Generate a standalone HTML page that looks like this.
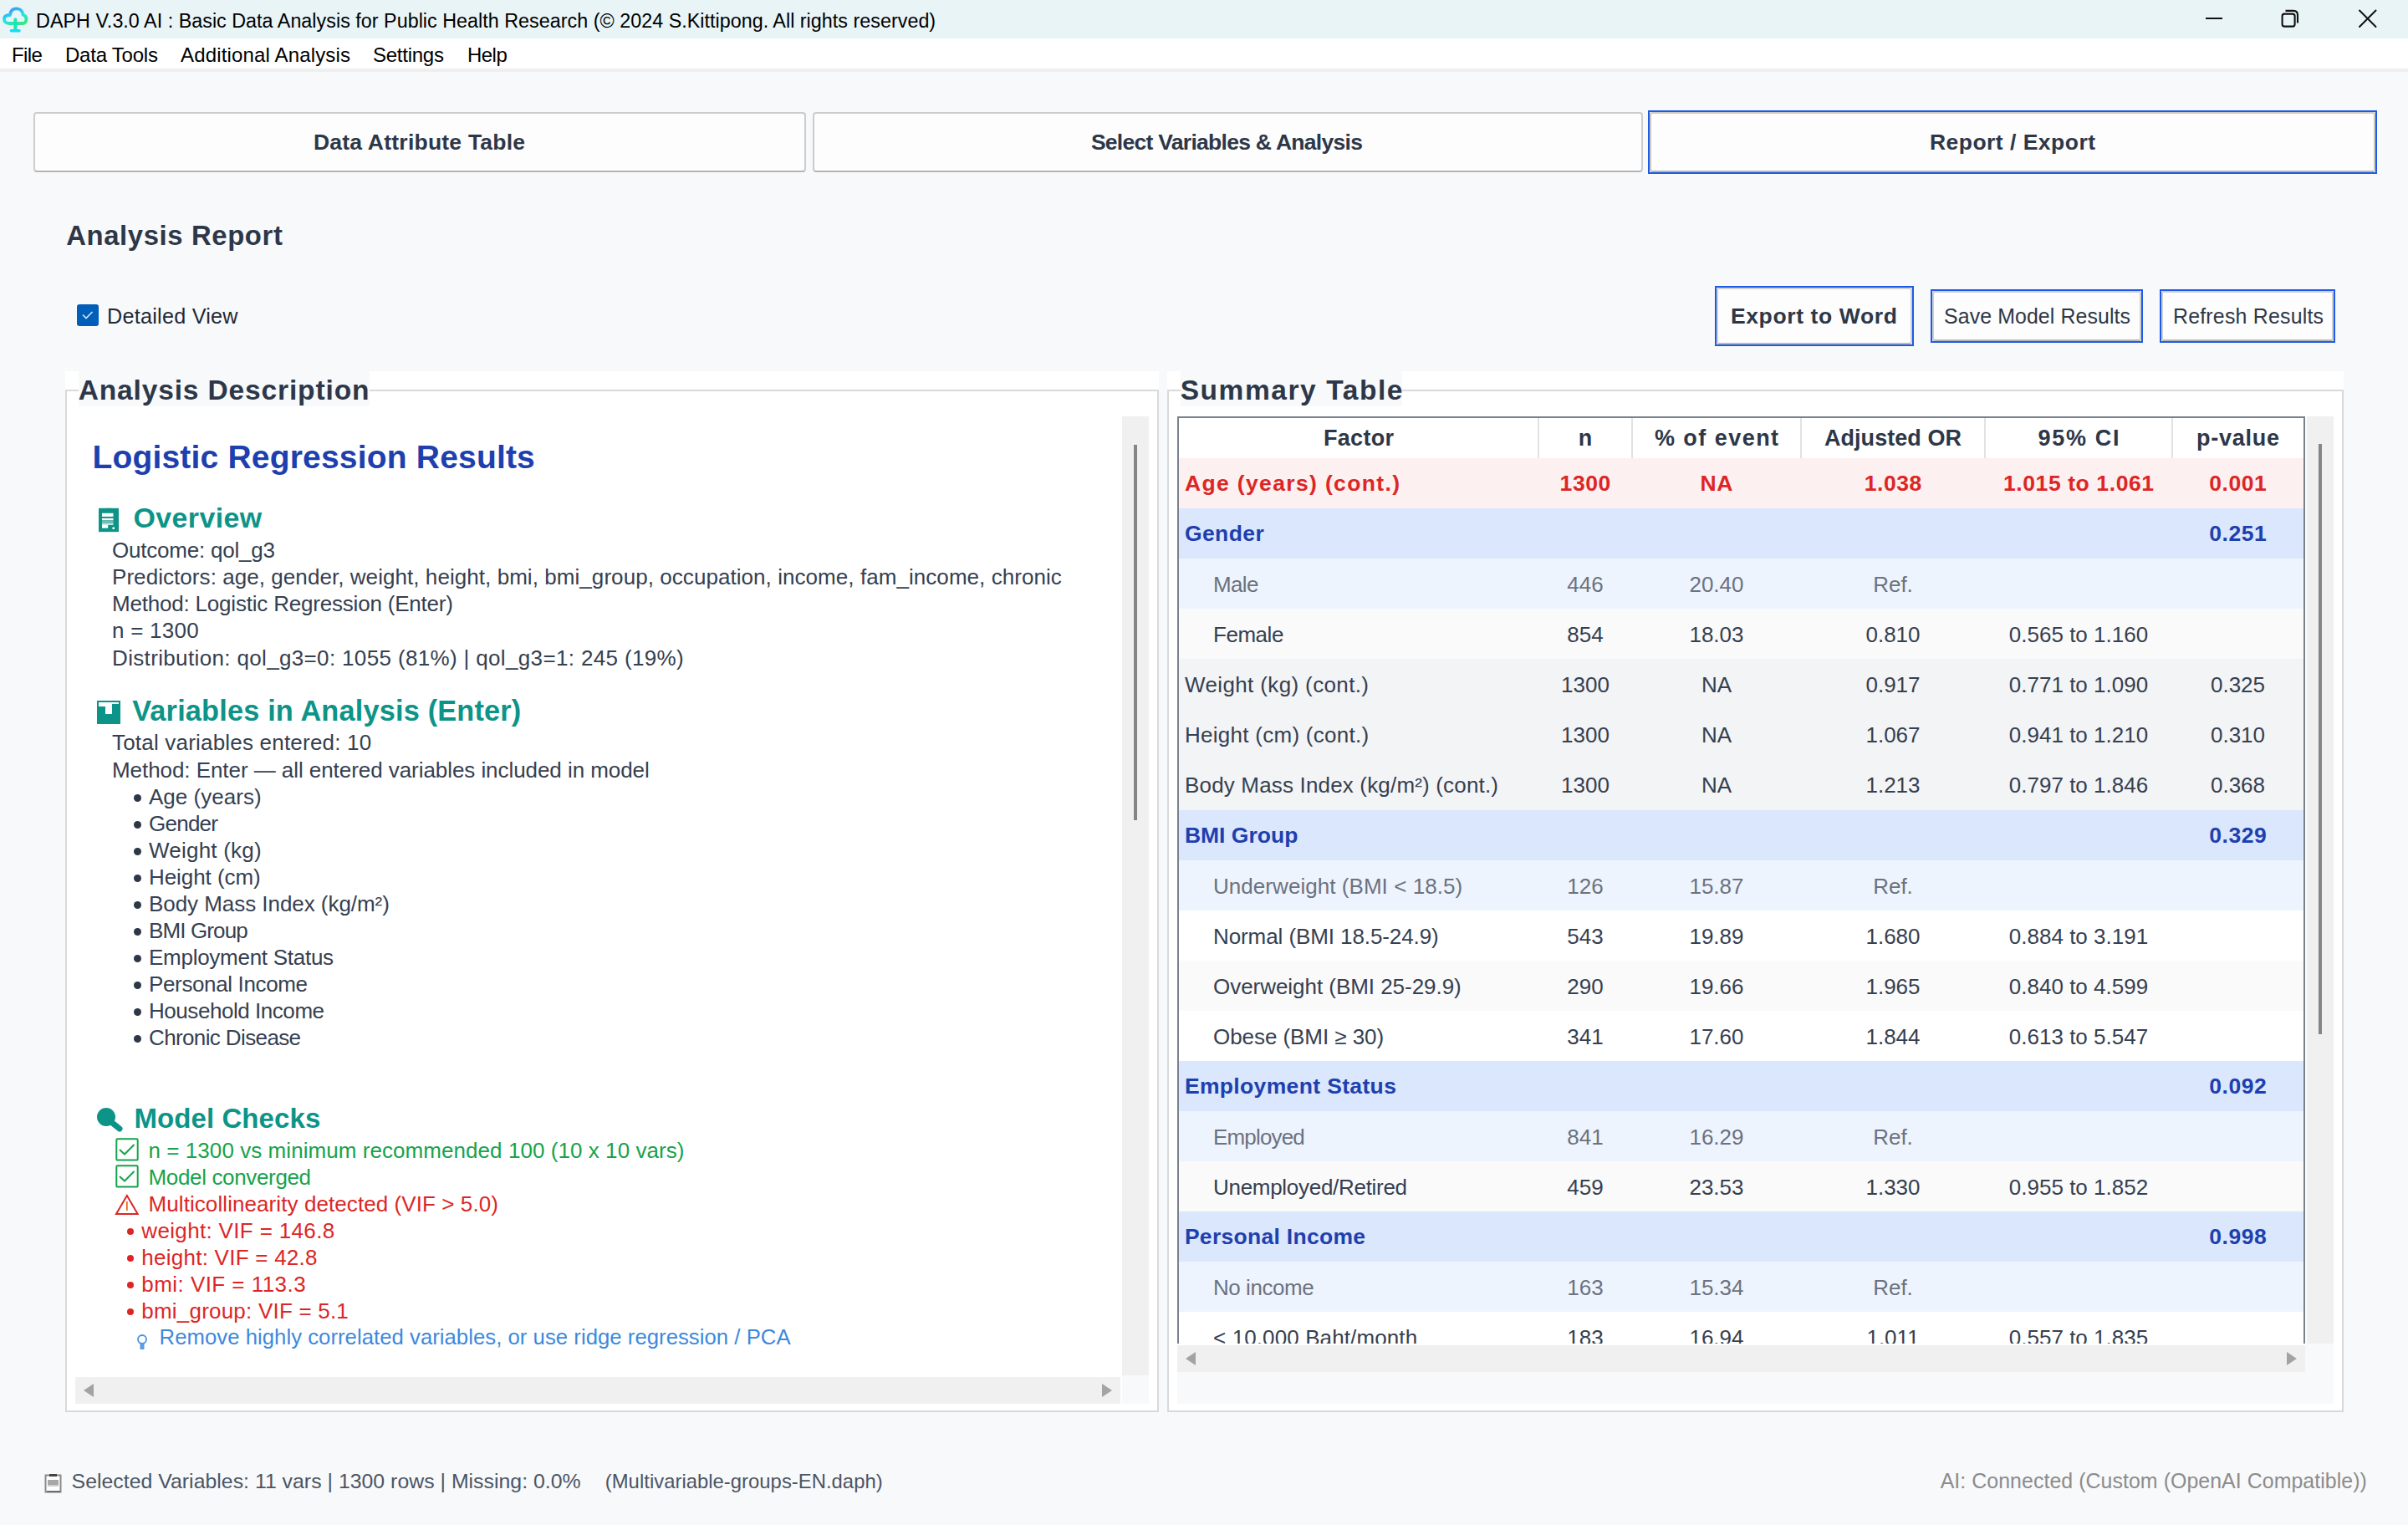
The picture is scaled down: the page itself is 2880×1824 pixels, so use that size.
<!DOCTYPE html><html><head><meta charset="utf-8"><title>DAPH Report</title><style>
html,body{margin:0;padding:0;width:2880px;height:1824px;overflow:hidden;background:#f8f9fb;font-family:"Liberation Sans", sans-serif;}
.t{position:absolute;white-space:pre;line-height:1;font-family:"Liberation Sans", sans-serif;}
.r{position:absolute;}
</style></head><body>
<div class="r" style="left:0px;top:0px;width:2880px;height:46px;background:#e9f4f7;"></div>
<svg class="r" style="left:0px;top:0px" width="40" height="44" viewBox="0 0 40 44"><defs><linearGradient id="cg" x1="0.3" y1="0.15" x2="0.75" y2="0.95"><stop offset="0" stop-color="#3aa6f4"/><stop offset="0.45" stop-color="#1ee6ee"/><stop offset="1" stop-color="#34e690"/></linearGradient></defs>
<path d="M11 28 C7 28 5 25.5 5 23 C5 20 7.5 18 12 18 C12.5 13 15.5 10.4 19.8 10.4 C24 10.4 27 13.5 27.5 17.5 C30 18.5 31.5 20.8 31.5 23 C31.5 26 29.5 28 27 28 Z" fill="none" stroke="url(#cg)" stroke-width="3.8" stroke-linejoin="round"/>
<path d="M18.4 23.5 V36" stroke="#16e6b8" stroke-width="4" stroke-linecap="round"/>
<path d="M13.5 36.8 H23" stroke="#18dcf0" stroke-width="3.6" stroke-linecap="round"/></svg>
<div class="t" style="top:13.6px;font-size:23.3px;font-weight:400;color:#000;letter-spacing:0.03px;left:43.1px;">DAPH V.3.0 AI : Basic Data Analysis for Public Health Research (© 2024 S.Kittipong. All rights reserved)</div>
<div class="r" style="left:2638px;top:21px;width:20px;height:2px;background:#111;"></div>
<svg class="r" style="left:2724px;top:8px" width="30" height="30" viewBox="0 0 30 30"><rect x="5.6" y="8.6" width="15" height="15" rx="2.6" fill="none" stroke="#111" stroke-width="2.1"/>
<path d="M9.5 4.9 H19 Q24 4.9 24 9.9 V19.6" fill="none" stroke="#111" stroke-width="2.1"/></svg>
<svg class="r" style="left:2816px;top:8px" width="32" height="30" viewBox="0 0 32 30"><path d="M6 4.5 L25.5 24 M25.5 4.5 L6 24" stroke="#111" stroke-width="2" stroke-linecap="round"/></svg>
<div class="r" style="left:0px;top:46px;width:2880px;height:36px;background:#ffffff;"></div>
<div class="r" style="left:0px;top:82px;width:2880px;height:4px;background:#efefef;"></div>
<div class="t" style="top:53.8px;font-size:24px;font-weight:400;color:#000;letter-spacing:-0.58px;left:14.0px;">File</div>
<div class="t" style="top:53.8px;font-size:24px;font-weight:400;color:#000;letter-spacing:-0.23px;left:78.0px;">Data Tools</div>
<div class="t" style="top:53.8px;font-size:24px;font-weight:400;color:#000;letter-spacing:0.16px;left:216.0px;">Additional Analysis</div>
<div class="t" style="top:53.8px;font-size:24px;font-weight:400;color:#000;letter-spacing:-0.26px;left:446.0px;">Settings</div>
<div class="t" style="top:53.8px;font-size:24px;font-weight:400;color:#000;letter-spacing:-0.48px;left:558.9px;">Help</div>
<div class="r" style="left:40px;top:134px;width:924px;height:72px;box-sizing:border-box;border:2px solid #cccccc;border-bottom-color:#b4b4b4;border-radius:4px;background:#fdfdfd;"></div>
<div class="t" style="top:157.0px;font-size:26.5px;font-weight:700;color:#2d3748;letter-spacing:0.23px;left:374.9px;">Data Attribute Table</div>
<div class="r" style="left:972px;top:134px;width:993px;height:72px;box-sizing:border-box;border:2px solid #cccccc;border-bottom-color:#b4b4b4;border-radius:4px;background:#fdfdfd;"></div>
<div class="t" style="top:157.0px;font-size:26.5px;font-weight:700;color:#2d3748;letter-spacing:-0.72px;left:1304.9px;">Select Variables &amp; Analysis</div>
<div class="r" style="left:1971px;top:132px;width:872px;height:76px;box-sizing:border-box;border:2px solid #1d5be6;"></div>
<div class="r" style="left:1973px;top:134px;width:868px;height:72px;box-sizing:border-box;border:2px solid #cdc8c0;border-bottom-color:#b9b4ac;border-radius:3px;background:#fdfdfd;"></div>
<div class="t" style="top:157.0px;font-size:26.5px;font-weight:700;color:#2d3748;letter-spacing:0.48px;left:2307.9px;">Report / Export</div>
<div class="t" style="top:265.7px;font-size:32.8px;font-weight:700;color:#2d3748;letter-spacing:0.64px;left:79.2px;">Analysis Report</div>
<div class="r" style="left:92px;top:364px;width:26px;height:26px;box-sizing:border-box;background:#005fb8;border-radius:3px;"></div>
<svg class="r" style="left:92px;top:364px" width="26" height="26" viewBox="0 0 26 26"><path d="M7 12.5 L11 16.5 L18.5 9" fill="none" stroke="#d6e6f6" stroke-width="1.6"/></svg>
<div class="t" style="top:366.3px;font-size:25.2px;font-weight:400;color:#1f2937;letter-spacing:0.25px;left:128.0px;">Detailed View</div>
<div class="r" style="left:2051px;top:342px;width:238px;height:72px;box-sizing:border-box;border:2px solid #1d5be6;"></div>
<div class="r" style="left:2053px;top:344px;width:234px;height:68px;box-sizing:border-box;border:2px solid #cfcfcf;border-bottom-color:#b9b9b9;border-radius:3px;background:#fdfdfd;"></div>
<div class="t" style="top:365.0px;font-size:26.5px;font-weight:700;color:#2d3748;letter-spacing:0.63px;left:2069.9px;">Export to Word</div>
<div class="r" style="left:2309px;top:346px;width:254px;height:64px;box-sizing:border-box;border:2px solid #1d5be6;"></div>
<div class="r" style="left:2311px;top:348px;width:250px;height:60px;box-sizing:border-box;border:2px solid #cfcfcf;border-bottom-color:#b9b9b9;border-radius:3px;background:#fdfdfd;"></div>
<div class="t" style="top:366.3px;font-size:24.9px;font-weight:400;color:#2d3748;letter-spacing:0.10px;left:2325.0px;">Save Model Results</div>
<div class="r" style="left:2583px;top:346px;width:210px;height:64px;box-sizing:border-box;border:2px solid #1d5be6;"></div>
<div class="r" style="left:2585px;top:348px;width:206px;height:60px;box-sizing:border-box;border:2px solid #cfcfcf;border-bottom-color:#b9b9b9;border-radius:3px;background:#fdfdfd;"></div>
<div class="t" style="top:366.3px;font-size:24.9px;font-weight:400;color:#2d3748;letter-spacing:0.21px;left:2599.0px;">Refresh Results</div>
<div class="r" style="left:78px;top:444px;width:1308px;height:1245px;background:#ffffff;"></div>
<div class="r" style="left:78px;top:466px;width:1308px;height:1223px;box-sizing:border-box;border:2px solid #d9d9d9;"></div>
<div class="r" style="left:94px;top:444px;width:348px;height:42px;background:#f8f9fb;"></div>
<div class="t" style="top:449.5px;font-size:33.5px;font-weight:700;color:#2d3748;letter-spacing:0.86px;left:93.7px;">Analysis Description</div>
<div class="r" style="left:1396px;top:444px;width:1407px;height:1245px;background:#ffffff;"></div>
<div class="r" style="left:1396px;top:466px;width:1407px;height:1223px;box-sizing:border-box;border:2px solid #d9d9d9;"></div>
<div class="r" style="left:1412px;top:444px;width:265px;height:42px;background:#f8f9fb;"></div>
<div class="t" style="top:449.5px;font-size:33.5px;font-weight:700;color:#2d3748;letter-spacing:1.56px;left:1411.7px;">Summary Table</div>
<div class="r" style="left:90px;top:498px;width:1252px;height:1149px;background:#ffffff;"></div>
<div class="r" style="left:1342px;top:498px;width:32px;height:1147px;background:#f0f0f0;"></div>
<div class="r" style="left:1356px;top:532px;width:4px;height:449px;background:#858585;"></div>
<div class="r" style="left:90px;top:1647px;width:1250px;height:32px;background:#f0f0f0;"></div>
<div class="r" style="left:1342px;top:1645px;width:32px;height:34px;background:#f8f9fb;"></div>
<svg class="r" style="left:100px;top:1655px" width="12" height="16" viewBox="0 0 12 16"><path d="M12 0 V16 L0 8 Z" fill="#a3a3a3"/></svg>
<svg class="r" style="left:1318px;top:1655px" width="12" height="16" viewBox="0 0 12 16"><path d="M0 0 V16 L12 8 Z" fill="#a3a3a3"/></svg>
<div class="r" style="left:1408px;top:1641px;width:1383px;height:38px;background:#f8f9fb;"></div>
<div class="r" style="left:2757px;top:1607px;width:34px;height:72px;background:#f8f9fb;"></div>
<div class="r" style="left:2759px;top:498px;width:32px;height:1109px;background:#f0f0f0;"></div>
<div class="r" style="left:2773px;top:531px;width:4px;height:706px;background:#858585;"></div>
<div class="r" style="left:1408px;top:1609px;width:1349px;height:32px;background:#f0f0f0;"></div>
<svg class="r" style="left:1418px;top:1617px" width="12" height="16" viewBox="0 0 12 16"><path d="M12 0 V16 L0 8 Z" fill="#a3a3a3"/></svg>
<svg class="r" style="left:2735px;top:1617px" width="12" height="16" viewBox="0 0 12 16"><path d="M0 0 V16 L12 8 Z" fill="#a3a3a3"/></svg>
<div class="r" style="left:1408px;top:498px;width:1349px;height:1109px;overflow:hidden;">
<div class="r" style="left:0px;top:0px;width:1349px;height:1109px;background:#ffffff;"></div>
<div class="r" style="left:431px;top:2px;width:2px;height:48px;background:#e2e2e2;"></div>
<div class="r" style="left:543px;top:2px;width:2px;height:48px;background:#e2e2e2;"></div>
<div class="r" style="left:745px;top:2px;width:2px;height:48px;background:#e2e2e2;"></div>
<div class="r" style="left:965px;top:2px;width:2px;height:48px;background:#e2e2e2;"></div>
<div class="r" style="left:1189px;top:2px;width:2px;height:48px;background:#e2e2e2;"></div>
<div class="t" style="top:13.1px;font-size:27px;font-weight:700;color:#2d3748;letter-spacing:0.33px;left:2px;width:430px;text-align:center;text-indent:0.33px;">Factor</div>
<div class="t" style="top:13.1px;font-size:27px;font-weight:700;color:#2d3748;left:432px;width:112px;text-align:center;">n</div>
<div class="t" style="top:13.1px;font-size:27px;font-weight:700;color:#2d3748;letter-spacing:1.46px;left:544px;width:202px;text-align:center;text-indent:1.46px;">% of event</div>
<div class="t" style="top:13.1px;font-size:27px;font-weight:700;color:#2d3748;letter-spacing:0.06px;left:746px;width:220px;text-align:center;text-indent:0.06px;">Adjusted OR</div>
<div class="t" style="top:13.1px;font-size:27px;font-weight:700;color:#2d3748;letter-spacing:1.72px;left:966px;width:224px;text-align:center;text-indent:1.72px;">95% CI</div>
<div class="t" style="top:13.1px;font-size:27px;font-weight:700;color:#2d3748;letter-spacing:0.77px;left:1190px;width:157px;text-align:center;text-indent:0.77px;">p-value</div>
<div class="r" style="left:2px;top:50px;width:1345px;height:60px;background:#fdf0f0;"></div>
<div class="t" style="top:67.2px;font-size:26.5px;font-weight:700;color:#dc2626;letter-spacing:1.36px;left:8.9px;">Age (years) (cont.)</div>
<div class="t" style="top:67.2px;font-size:26.5px;font-weight:700;color:#dc2626;letter-spacing:0.60px;left:432px;width:112px;text-align:center;text-indent:0.60px;">1300</div>
<div class="t" style="top:67.2px;font-size:26.5px;font-weight:700;color:#dc2626;letter-spacing:0.60px;left:544px;width:202px;text-align:center;text-indent:0.60px;">NA</div>
<div class="t" style="top:67.2px;font-size:26.5px;font-weight:700;color:#dc2626;letter-spacing:0.60px;left:746px;width:220px;text-align:center;text-indent:0.60px;">1.038</div>
<div class="t" style="top:67.2px;font-size:26.5px;font-weight:700;color:#dc2626;letter-spacing:0.60px;left:966px;width:224px;text-align:center;text-indent:0.60px;">1.015 to 1.061</div>
<div class="t" style="top:67.2px;font-size:26.5px;font-weight:700;color:#dc2626;letter-spacing:0.60px;left:1190px;width:157px;text-align:center;text-indent:0.60px;">0.001</div>
<div class="r" style="left:2px;top:110px;width:1345px;height:60px;background:#dbe7fc;"></div>
<div class="t" style="top:127.2px;font-size:26.5px;font-weight:700;color:#1e40af;letter-spacing:0.41px;left:8.9px;">Gender</div>
<div class="t" style="top:127.2px;font-size:26.5px;font-weight:700;color:#1e40af;letter-spacing:0.60px;left:1190px;width:157px;text-align:center;text-indent:0.60px;">0.251</div>
<div class="r" style="left:2px;top:170px;width:1345px;height:60px;background:#eef4fe;"></div>
<div class="t" style="top:187.6px;font-size:26px;font-weight:400;color:#6b7280;letter-spacing:-0.63px;left:43.0px;">Male</div>
<div class="t" style="top:187.6px;font-size:26px;font-weight:400;color:#6b7280;left:432px;width:112px;text-align:center;">446</div>
<div class="t" style="top:187.6px;font-size:26px;font-weight:400;color:#6b7280;left:544px;width:202px;text-align:center;">20.40</div>
<div class="t" style="top:187.6px;font-size:26px;font-weight:400;color:#6b7280;left:746px;width:220px;text-align:center;">Ref.</div>
<div class="r" style="left:2px;top:230px;width:1345px;height:60px;background:#fafafa;"></div>
<div class="t" style="top:247.6px;font-size:26px;font-weight:400;color:#354050;letter-spacing:-0.46px;left:43.0px;">Female</div>
<div class="t" style="top:247.6px;font-size:26px;font-weight:400;color:#354050;left:432px;width:112px;text-align:center;">854</div>
<div class="t" style="top:247.6px;font-size:26px;font-weight:400;color:#354050;left:544px;width:202px;text-align:center;">18.03</div>
<div class="t" style="top:247.6px;font-size:26px;font-weight:400;color:#354050;left:746px;width:220px;text-align:center;">0.810</div>
<div class="t" style="top:247.6px;font-size:26px;font-weight:400;color:#354050;left:966px;width:224px;text-align:center;">0.565 to 1.160</div>
<div class="r" style="left:2px;top:290px;width:1345px;height:60px;background:#f3f4f6;"></div>
<div class="t" style="top:307.6px;font-size:26px;font-weight:400;color:#354050;letter-spacing:0.37px;left:9.0px;">Weight (kg) (cont.)</div>
<div class="t" style="top:307.6px;font-size:26px;font-weight:400;color:#354050;left:432px;width:112px;text-align:center;">1300</div>
<div class="t" style="top:307.6px;font-size:26px;font-weight:400;color:#354050;left:544px;width:202px;text-align:center;">NA</div>
<div class="t" style="top:307.6px;font-size:26px;font-weight:400;color:#354050;left:746px;width:220px;text-align:center;">0.917</div>
<div class="t" style="top:307.6px;font-size:26px;font-weight:400;color:#354050;left:966px;width:224px;text-align:center;">0.771 to 1.090</div>
<div class="t" style="top:307.6px;font-size:26px;font-weight:400;color:#354050;left:1190px;width:157px;text-align:center;">0.325</div>
<div class="r" style="left:2px;top:350px;width:1345px;height:60px;background:#f3f4f6;"></div>
<div class="t" style="top:367.6px;font-size:26px;font-weight:400;color:#354050;letter-spacing:0.27px;left:9.0px;">Height (cm) (cont.)</div>
<div class="t" style="top:367.6px;font-size:26px;font-weight:400;color:#354050;left:432px;width:112px;text-align:center;">1300</div>
<div class="t" style="top:367.6px;font-size:26px;font-weight:400;color:#354050;left:544px;width:202px;text-align:center;">NA</div>
<div class="t" style="top:367.6px;font-size:26px;font-weight:400;color:#354050;left:746px;width:220px;text-align:center;">1.067</div>
<div class="t" style="top:367.6px;font-size:26px;font-weight:400;color:#354050;left:966px;width:224px;text-align:center;">0.941 to 1.210</div>
<div class="t" style="top:367.6px;font-size:26px;font-weight:400;color:#354050;left:1190px;width:157px;text-align:center;">0.310</div>
<div class="r" style="left:2px;top:410px;width:1345px;height:61px;background:#f3f4f6;"></div>
<div class="t" style="top:428.1px;font-size:26px;font-weight:400;color:#354050;letter-spacing:0.17px;left:9.0px;">Body Mass Index (kg/m²) (cont.)</div>
<div class="t" style="top:428.1px;font-size:26px;font-weight:400;color:#354050;left:432px;width:112px;text-align:center;">1300</div>
<div class="t" style="top:428.1px;font-size:26px;font-weight:400;color:#354050;left:544px;width:202px;text-align:center;">NA</div>
<div class="t" style="top:428.1px;font-size:26px;font-weight:400;color:#354050;left:746px;width:220px;text-align:center;">1.213</div>
<div class="t" style="top:428.1px;font-size:26px;font-weight:400;color:#354050;left:966px;width:224px;text-align:center;">0.797 to 1.846</div>
<div class="t" style="top:428.1px;font-size:26px;font-weight:400;color:#354050;left:1190px;width:157px;text-align:center;">0.368</div>
<div class="r" style="left:2px;top:471px;width:1345px;height:60px;background:#dbe7fc;"></div>
<div class="t" style="top:488.2px;font-size:26.5px;font-weight:700;color:#1e40af;left:8.9px;">BMI Group</div>
<div class="t" style="top:488.2px;font-size:26.5px;font-weight:700;color:#1e40af;letter-spacing:0.60px;left:1190px;width:157px;text-align:center;text-indent:0.60px;">0.329</div>
<div class="r" style="left:2px;top:531px;width:1345px;height:60px;background:#eef4fe;"></div>
<div class="t" style="top:548.6px;font-size:26px;font-weight:400;color:#6b7280;letter-spacing:0.05px;left:43.0px;">Underweight (BMI &lt; 18.5)</div>
<div class="t" style="top:548.6px;font-size:26px;font-weight:400;color:#6b7280;left:432px;width:112px;text-align:center;">126</div>
<div class="t" style="top:548.6px;font-size:26px;font-weight:400;color:#6b7280;left:544px;width:202px;text-align:center;">15.87</div>
<div class="t" style="top:548.6px;font-size:26px;font-weight:400;color:#6b7280;left:746px;width:220px;text-align:center;">Ref.</div>
<div class="r" style="left:2px;top:591px;width:1345px;height:60px;background:#ffffff;"></div>
<div class="t" style="top:608.6px;font-size:26px;font-weight:400;color:#354050;letter-spacing:-0.09px;left:43.0px;">Normal (BMI 18.5-24.9)</div>
<div class="t" style="top:608.6px;font-size:26px;font-weight:400;color:#354050;left:432px;width:112px;text-align:center;">543</div>
<div class="t" style="top:608.6px;font-size:26px;font-weight:400;color:#354050;left:544px;width:202px;text-align:center;">19.89</div>
<div class="t" style="top:608.6px;font-size:26px;font-weight:400;color:#354050;left:746px;width:220px;text-align:center;">1.680</div>
<div class="t" style="top:608.6px;font-size:26px;font-weight:400;color:#354050;left:966px;width:224px;text-align:center;">0.884 to 3.191</div>
<div class="r" style="left:2px;top:651px;width:1345px;height:60px;background:#fafafa;"></div>
<div class="t" style="top:668.6px;font-size:26px;font-weight:400;color:#354050;letter-spacing:-0.04px;left:43.0px;">Overweight (BMI 25-29.9)</div>
<div class="t" style="top:668.6px;font-size:26px;font-weight:400;color:#354050;left:432px;width:112px;text-align:center;">290</div>
<div class="t" style="top:668.6px;font-size:26px;font-weight:400;color:#354050;left:544px;width:202px;text-align:center;">19.66</div>
<div class="t" style="top:668.6px;font-size:26px;font-weight:400;color:#354050;left:746px;width:220px;text-align:center;">1.965</div>
<div class="t" style="top:668.6px;font-size:26px;font-weight:400;color:#354050;left:966px;width:224px;text-align:center;">0.840 to 4.599</div>
<div class="r" style="left:2px;top:711px;width:1345px;height:60px;background:#ffffff;"></div>
<div class="t" style="top:728.6px;font-size:26px;font-weight:400;color:#354050;letter-spacing:-0.06px;left:43.0px;">Obese (BMI ≥ 30)</div>
<div class="t" style="top:728.6px;font-size:26px;font-weight:400;color:#354050;left:432px;width:112px;text-align:center;">341</div>
<div class="t" style="top:728.6px;font-size:26px;font-weight:400;color:#354050;left:544px;width:202px;text-align:center;">17.60</div>
<div class="t" style="top:728.6px;font-size:26px;font-weight:400;color:#354050;left:746px;width:220px;text-align:center;">1.844</div>
<div class="t" style="top:728.6px;font-size:26px;font-weight:400;color:#354050;left:966px;width:224px;text-align:center;">0.613 to 5.547</div>
<div class="r" style="left:2px;top:771px;width:1345px;height:60px;background:#dbe7fc;"></div>
<div class="t" style="top:788.2px;font-size:26.5px;font-weight:700;color:#1e40af;letter-spacing:0.35px;left:8.9px;">Employment Status</div>
<div class="t" style="top:788.2px;font-size:26.5px;font-weight:700;color:#1e40af;letter-spacing:0.60px;left:1190px;width:157px;text-align:center;text-indent:0.60px;">0.092</div>
<div class="r" style="left:2px;top:831px;width:1345px;height:60px;background:#eef4fe;"></div>
<div class="t" style="top:848.6px;font-size:26px;font-weight:400;color:#6b7280;letter-spacing:-0.83px;left:43.0px;">Employed</div>
<div class="t" style="top:848.6px;font-size:26px;font-weight:400;color:#6b7280;left:432px;width:112px;text-align:center;">841</div>
<div class="t" style="top:848.6px;font-size:26px;font-weight:400;color:#6b7280;left:544px;width:202px;text-align:center;">16.29</div>
<div class="t" style="top:848.6px;font-size:26px;font-weight:400;color:#6b7280;left:746px;width:220px;text-align:center;">Ref.</div>
<div class="r" style="left:2px;top:891px;width:1345px;height:60px;background:#fafafa;"></div>
<div class="t" style="top:908.6px;font-size:26px;font-weight:400;color:#354050;letter-spacing:-0.29px;left:43.0px;">Unemployed/Retired</div>
<div class="t" style="top:908.6px;font-size:26px;font-weight:400;color:#354050;left:432px;width:112px;text-align:center;">459</div>
<div class="t" style="top:908.6px;font-size:26px;font-weight:400;color:#354050;left:544px;width:202px;text-align:center;">23.53</div>
<div class="t" style="top:908.6px;font-size:26px;font-weight:400;color:#354050;left:746px;width:220px;text-align:center;">1.330</div>
<div class="t" style="top:908.6px;font-size:26px;font-weight:400;color:#354050;left:966px;width:224px;text-align:center;">0.955 to 1.852</div>
<div class="r" style="left:2px;top:951px;width:1345px;height:60px;background:#dbe7fc;"></div>
<div class="t" style="top:968.2px;font-size:26.5px;font-weight:700;color:#1e40af;letter-spacing:0.29px;left:8.9px;">Personal Income</div>
<div class="t" style="top:968.2px;font-size:26.5px;font-weight:700;color:#1e40af;letter-spacing:0.60px;left:1190px;width:157px;text-align:center;text-indent:0.60px;">0.998</div>
<div class="r" style="left:2px;top:1011px;width:1345px;height:60px;background:#eef4fe;"></div>
<div class="t" style="top:1028.6px;font-size:26px;font-weight:400;color:#6b7280;letter-spacing:-0.46px;left:43.0px;">No income</div>
<div class="t" style="top:1028.6px;font-size:26px;font-weight:400;color:#6b7280;left:432px;width:112px;text-align:center;">163</div>
<div class="t" style="top:1028.6px;font-size:26px;font-weight:400;color:#6b7280;left:544px;width:202px;text-align:center;">15.34</div>
<div class="t" style="top:1028.6px;font-size:26px;font-weight:400;color:#6b7280;left:746px;width:220px;text-align:center;">Ref.</div>
<div class="r" style="left:2px;top:1071px;width:1345px;height:60px;background:#ffffff;"></div>
<div class="t" style="top:1088.6px;font-size:26px;font-weight:400;color:#354050;letter-spacing:0.11px;left:43.0px;">&lt; 10,000 Baht/month</div>
<div class="t" style="top:1088.6px;font-size:26px;font-weight:400;color:#354050;left:432px;width:112px;text-align:center;">183</div>
<div class="t" style="top:1088.6px;font-size:26px;font-weight:400;color:#354050;left:544px;width:202px;text-align:center;">16.94</div>
<div class="t" style="top:1088.6px;font-size:26px;font-weight:400;color:#354050;left:746px;width:220px;text-align:center;">1.011</div>
<div class="t" style="top:1088.6px;font-size:26px;font-weight:400;color:#354050;left:966px;width:224px;text-align:center;">0.557 to 1.835</div>
<div class="r" style="left:0px;top:0px;width:1349px;height:2px;background:#7a818d;"></div>
<div class="r" style="left:0px;top:0px;width:2px;height:1109px;background:#7a818d;"></div>
<div class="r" style="left:1347px;top:0px;width:2px;height:1109px;background:#7a818d;"></div>
</div>
<div class="t" style="top:526.9px;font-size:39px;font-weight:700;color:#1e3fae;letter-spacing:0.19px;left:110.4px;">Logistic Regression Results</div>
<svg class="r" style="left:118px;top:607px" width="24" height="30" viewBox="0 0 24 30"><rect x="0" y="0.8" width="24" height="28.4" fill="#0d9488"/>
<rect x="4" y="6.8" width="13.5" height="4.1" fill="#fff"/><rect x="4" y="12.9" width="13.5" height="2.3" fill="#fff"/>
<rect x="4" y="15.2" width="13.5" height="3.8" fill="#70bdb5"/><rect x="4" y="19" width="13.5" height="2" fill="#c8e6e2"/>
<rect x="4" y="21" width="7.2" height="3.7" fill="#fff"/><rect x="16.5" y="23.5" width="2.5" height="2.5" fill="#fff"/><rect x="9" y="0" width="6" height="1" fill="#b8dcd8"/></svg>
<div class="t" style="top:603.2px;font-size:33.9px;font-weight:700;color:#0d9488;letter-spacing:0.40px;left:159.6px;">Overview</div>
<div class="t" style="top:645.1px;font-size:26px;font-weight:400;color:#354050;letter-spacing:-0.21px;left:134.0px;">Outcome: qol_g3</div>
<div class="t" style="top:677.2px;font-size:26px;font-weight:400;color:#354050;letter-spacing:0.06px;left:134.0px;">Predictors: age, gender, weight, height, bmi, bmi_group, occupation, income, fam_income, chronic</div>
<div class="t" style="top:709.3px;font-size:26px;font-weight:400;color:#354050;letter-spacing:-0.20px;left:134.0px;">Method: Logistic Regression (Enter)</div>
<div class="t" style="top:741.4px;font-size:26px;font-weight:400;color:#354050;letter-spacing:0.25px;left:134.0px;">n = 1300</div>
<div class="t" style="top:773.5px;font-size:26px;font-weight:400;color:#354050;letter-spacing:0.35px;left:134.0px;">Distribution: qol_g3=0: 1055 (81%) | qol_g3=1: 245 (19%)</div>
<svg class="r" style="left:115px;top:837px" width="30" height="30" viewBox="0 0 30 30"><path d="M1 1 H29 V29 H1 Z M3 3 V8 H11 V17 H19 V5 H27 V3 Z" fill="#0d9488" fill-rule="evenodd"/></svg>
<div class="t" style="top:833.1px;font-size:34.3px;font-weight:700;color:#0d9488;letter-spacing:0.18px;left:158.2px;">Variables in Analysis (Enter)</div>
<div class="t" style="top:875.1px;font-size:26px;font-weight:400;color:#354050;letter-spacing:0.20px;left:134.0px;">Total variables entered: 10</div>
<div class="t" style="top:907.7px;font-size:26px;font-weight:400;color:#354050;letter-spacing:-0.06px;left:134.0px;">Method: Enter — all entered variables included in model</div>
<div class="r" style="left:160px;top:949.8px;width:9px;height:9px;border-radius:50%;background:#2d3748"></div>
<div class="t" style="top:940.2px;font-size:26px;font-weight:400;color:#354050;letter-spacing:0.03px;left:178.0px;">Age (years)</div>
<div class="r" style="left:160px;top:981.8px;width:9px;height:9px;border-radius:50%;background:#2d3748"></div>
<div class="t" style="top:972.2px;font-size:26px;font-weight:400;color:#354050;letter-spacing:-0.75px;left:178.0px;">Gender</div>
<div class="r" style="left:160px;top:1013.8px;width:9px;height:9px;border-radius:50%;background:#2d3748"></div>
<div class="t" style="top:1004.2px;font-size:26px;font-weight:400;color:#354050;letter-spacing:0.22px;left:178.0px;">Weight (kg)</div>
<div class="r" style="left:160px;top:1045.8px;width:9px;height:9px;border-radius:50%;background:#2d3748"></div>
<div class="t" style="top:1036.2px;font-size:26px;font-weight:400;color:#354050;letter-spacing:-0.07px;left:178.0px;">Height (cm)</div>
<div class="r" style="left:160px;top:1077.8px;width:9px;height:9px;border-radius:50%;background:#2d3748"></div>
<div class="t" style="top:1068.2px;font-size:26px;font-weight:400;color:#354050;letter-spacing:-0.05px;left:178.0px;">Body Mass Index (kg/m²)</div>
<div class="r" style="left:160px;top:1109.8px;width:9px;height:9px;border-radius:50%;background:#2d3748"></div>
<div class="t" style="top:1100.2px;font-size:26px;font-weight:400;color:#354050;letter-spacing:-0.88px;left:178.0px;">BMI Group</div>
<div class="r" style="left:160px;top:1141.8px;width:9px;height:9px;border-radius:50%;background:#2d3748"></div>
<div class="t" style="top:1132.2px;font-size:26px;font-weight:400;color:#354050;letter-spacing:-0.27px;left:178.0px;">Employment Status</div>
<div class="r" style="left:160px;top:1173.8px;width:9px;height:9px;border-radius:50%;background:#2d3748"></div>
<div class="t" style="top:1164.2px;font-size:26px;font-weight:400;color:#354050;letter-spacing:-0.36px;left:178.0px;">Personal Income</div>
<div class="r" style="left:160px;top:1205.8px;width:9px;height:9px;border-radius:50%;background:#2d3748"></div>
<div class="t" style="top:1196.2px;font-size:26px;font-weight:400;color:#354050;letter-spacing:-0.45px;left:178.0px;">Household Income</div>
<div class="r" style="left:160px;top:1237.8px;width:9px;height:9px;border-radius:50%;background:#2d3748"></div>
<div class="t" style="top:1228.2px;font-size:26px;font-weight:400;color:#354050;letter-spacing:-0.62px;left:178.0px;">Chronic Disease</div>
<svg class="r" style="left:114px;top:1323px" width="34" height="32" viewBox="0 0 34 32"><circle cx="13" cy="13" r="11" fill="#0d9488"/><path d="M19 19 L29 27" stroke="#0d9488" stroke-width="7" stroke-linecap="round"/></svg>
<div class="t" style="top:1320.5px;font-size:33px;font-weight:700;color:#0d9488;letter-spacing:0.09px;left:160.4px;">Model Checks</div>
<svg class="r" style="left:137px;top:1360px" width="30" height="30" viewBox="0 0 30 30"><rect x="2.3" y="2.2" width="25.4" height="25.4" rx="1.2" fill="none" stroke="#16a34a" stroke-width="2"/><path d="M6 15 L12 20.5 L23.5 9" fill="none" stroke="#16a34a" stroke-width="2"/></svg>
<div class="t" style="top:1363.1px;font-size:26px;font-weight:400;color:#16a34a;letter-spacing:0.06px;left:177.5px;">n = 1300 vs minimum recommended 100 (10 x 10 vars)</div>
<svg class="r" style="left:137px;top:1392px" width="30" height="30" viewBox="0 0 30 30"><rect x="2.3" y="2.2" width="25.4" height="25.4" rx="1.2" fill="none" stroke="#16a34a" stroke-width="2"/><path d="M6 15 L12 20.5 L23.5 9" fill="none" stroke="#16a34a" stroke-width="2"/></svg>
<div class="t" style="top:1394.7px;font-size:26px;font-weight:400;color:#16a34a;letter-spacing:-0.35px;left:177.5px;">Model converged</div>
<svg class="r" style="left:136px;top:1427px" width="32" height="28" viewBox="0 0 32 28"><path d="M15.85 3 L28.7 25 H3 Z" fill="none" stroke="#dc2626" stroke-width="2" stroke-linejoin="miter"/><path d="M15.85 10 V21" stroke="#ea580c" stroke-width="1.6"/></svg>
<div class="t" style="top:1427.4px;font-size:26px;font-weight:400;color:#dc2626;letter-spacing:0.08px;left:177.5px;">Multicollinearity detected (VIF &gt; 5.0)</div>
<div class="r" style="left:152px;top:1468.7px;width:8px;height:8px;border-radius:50%;background:#dc2626"></div>
<div class="t" style="top:1459.1px;font-size:26px;font-weight:400;color:#dc2626;letter-spacing:0.34px;left:169.3px;">weight: VIF = 146.8</div>
<div class="r" style="left:152px;top:1500.7px;width:8px;height:8px;border-radius:50%;background:#dc2626"></div>
<div class="t" style="top:1491.1px;font-size:26px;font-weight:400;color:#dc2626;letter-spacing:0.25px;left:169.3px;">height: VIF = 42.8</div>
<div class="r" style="left:152px;top:1532.7px;width:8px;height:8px;border-radius:50%;background:#dc2626"></div>
<div class="t" style="top:1523.1px;font-size:26px;font-weight:400;color:#dc2626;letter-spacing:0.45px;left:169.3px;">bmi: VIF = 113.3</div>
<div class="r" style="left:152px;top:1564.7px;width:8px;height:8px;border-radius:50%;background:#dc2626"></div>
<div class="t" style="top:1555.1px;font-size:26px;font-weight:400;color:#dc2626;letter-spacing:0.21px;left:169.3px;">bmi_group: VIF = 5.1</div>
<svg class="r" style="left:163px;top:1596px" width="14" height="20" viewBox="0 0 14 20"><circle cx="7" cy="6" r="5" fill="none" stroke="#4a90e2" stroke-width="1.8"/><rect x="4.5" y="11" width="5" height="7" fill="#5b9be8"/></svg>
<div class="t" style="top:1586.5px;font-size:25.7px;font-weight:400;color:#3d89dc;letter-spacing:0.04px;left:190.6px;">Remove highly correlated variables, or use ridge regression / PCA</div>
<svg class="r" style="left:53px;top:1762px" width="22" height="24" viewBox="0 0 22 24"><rect x="1.5" y="2.5" width="18" height="20" fill="#fff" stroke="#8a8a8a" stroke-width="2"/><rect x="6" y="1" width="9" height="3" fill="#444"/>
<rect x="4" y="8" width="13" height="6" fill="#a8a8a8"/><rect x="4" y="14" width="13" height="2" fill="#cfcfcf"/><rect x="3" y="21" width="16" height="2" fill="#6e6e6e"/></svg>
<div class="t" style="top:1759.5px;font-size:24.8px;font-weight:400;color:#4b5563;letter-spacing:0.03px;left:85.6px;">Selected Variables: 11 vars | 1300 rows | Missing: 0.0%</div>
<div class="t" style="top:1760.4px;font-size:23.8px;font-weight:400;color:#4b5563;letter-spacing:0.04px;left:723.8px;">(Multivariable-groups-EN.daph)</div>
<div class="t" style="top:1758.8px;font-size:24.9px;font-weight:400;color:#8c8c8c;letter-spacing:0.06px;left:2320.7px;">AI: Connected (Custom (OpenAI Compatible))</div>
</body></html>
